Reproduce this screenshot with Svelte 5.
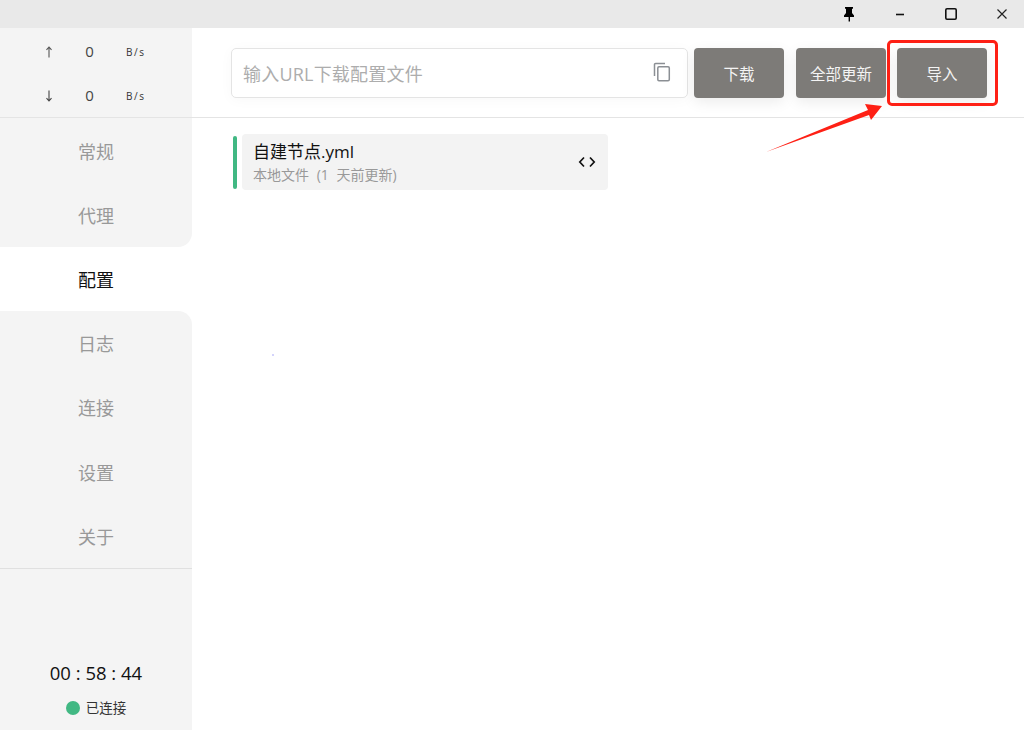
<script>
  const nav = ['常规', '代理', '配置', '日志', '连接', '设置', '关于'];
  const active = 2;
</script>

<div class="window">
  <header class="titlebar">
    <button class="win" aria-label="pin">
      <svg width="14" height="16" viewBox="0 0 14 16"><path d="M3 1h8v1.500L10 3v4l2 2.400V11H8v4.500H6.600V11H2V9.400L4 7V3L3 2.500z" fill="#000"/></svg>
    </button>
    <button class="win" aria-label="minimize">
      <svg width="12" height="12" viewBox="0 0 12 12"><path d="M2 6.500h8" stroke="#111" stroke-width="1.600"/></svg>
    </button>
    <button class="win" aria-label="maximize">
      <svg width="14" height="14" viewBox="0 0 14 14"><rect x="1.800" y="1.800" width="10.400" height="10.400" rx="1.200" fill="none" stroke="#111" stroke-width="1.600"/></svg>
    </button>
    <button class="win" aria-label="close">
      <svg width="12" height="12" viewBox="0 0 12 12"><path d="M1.500 1.500l9 9M10.500 1.500l-9 9" stroke="#222" stroke-width="1.200"/></svg>
    </button>
  </header>

  <div class="body">
    <aside class="sidebar">
      <div class="traffic">
        <div class="rate">
          <svg class="dir" width="8" height="12" viewBox="0 0 8 12" fill="none" stroke="#555" stroke-width="1.100"><path d="M4 11.500V1M1.500 3.800L4 1l2.500 2.800"/></svg>
          <span class="num">0</span><span class="unit">B/s</span>
        </div>
        <div class="rate">
          <svg class="dir" width="8" height="12" viewBox="0 0 8 12" fill="none" stroke="#444" stroke-width="1.100"><path d="M4 .5V11M1.500 8.200L4 11l2.500-2.800"/></svg>
          <span class="num">0</span><span class="unit">B/s</span>
        </div>
      </div>

      <nav class="nav">
        {#each nav as item, i}
          <div class="nav-item" class:active={i === active} class:before={i === active - 1} class:after={i === active + 1}>{item}</div>
        {/each}
      </nav>

      <div class="status">
        <div class="timer">00 : 58 : 44</div>
        <div class="conn"><span class="dot"></span>已连接</div>
      </div>
    </aside>

    <main class="main">
      <div class="toolbar">
        <div class="url">
          <span class="placeholder">输入URL下载配置文件</span>
          <svg class="copy" width="18" height="20" viewBox="0 0 18 20" fill="none" stroke="#8b8f94" stroke-width="1.500">
            <path d="M1.500 14V2.600A1.100 1.100 0 0 1 2.600 1.500H12"/>
            <rect x="4.800" y="4.800" width="11.500" height="14" rx="1.200"/>
          </svg>
        </div>
        <button class="btn first">下载</button>
        <button class="btn second">全部更新</button>
        <button class="btn third">导入</button>
      </div>

      <div class="content">
        <div class="profile">
          <span class="bar"></span>
          <div class="card">
            <div class="info">
              <div class="name">自建节点.yml</div>
              <div class="meta">本地文件 (1 天前更新)</div>
            </div>
            <svg class="code" width="18" height="12" viewBox="0 0 18 12" fill="none" stroke="#111" stroke-width="1.700">
              <path d="M6 1.500L1.800 6 6 10.500M12 1.500L16.200 6 12 10.500"/>
            </svg>
          </div>
        </div>
      </div>
    </main>
  </div>

  <div class="highlight"></div>
  <svg class="arrow" width="130" height="65" viewBox="0 0 130 65">
    <path d="M6 62L108 20 105 14 122 16 111 30 109 25z" fill="#fe2015"/>
  </svg>
  <span class="speck"></span>
</div>

<style>
  :global(body) {
    margin: 0;
    background: #fff;
  }
  .window {
    position: relative;
    width: 1024px;
    height: 730px;
    overflow: hidden;
    display: flex;
    flex-direction: column;
    font-family: "Open Sans", "Noto Sans CJK SC", sans-serif;
    color: #111;
  }
  .titlebar {
    height: 28px;
    flex: none;
    background: #e9e9e9;
    display: flex;
    justify-content: flex-end;
    gap: 7px;
  }
  .win {
    width: 44px;
    border: 0;
    padding: 0;
    background: none;
    display: flex;
    align-items: center;
    justify-content: center;
  }
  .body {
    flex: 1;
    display: flex;
    min-height: 0;
  }
  .sidebar {
    width: 192px;
    flex: none;
    background: #f4f4f4;
    display: flex;
    flex-direction: column;
  }
  .traffic {
    height: 90px;
    box-sizing: border-box;
    border-bottom: 1px solid #e4e4e4;
    padding-top: 1px;
    display: flex;
    flex-direction: column;
  }
  .rate {
    height: 44px;
    display: grid;
    grid-template-columns: 61px 57px 1fr;
    align-items: center;
    font-size: 14px;
    color: #444;
  }
  .dir {
    justify-self: end;
    margin-right: 8px;
    margin-top: 1px;
  }
  .num {
    text-align: center;
    font-size: 15px;
    line-height: 20px;
    margin-top: -1px;
  }
  .unit {
    font-size: 10px;
    letter-spacing: 1.600px;
    padding-left: 8px;
    padding-top: 2px;
    color: #333;
  }
  .nav {
    padding-top: 1px;
    border-bottom: 1px solid #e0e0e0;
    background: #fff;
  }
  .nav-item {
    height: 64.100px;
    box-sizing: border-box;
    display: flex;
    align-items: center;
    justify-content: center;
    background: #f4f4f4;
    font-size: 18px;
    color: #999;
  }
  .nav-item:first-child {
    box-shadow: 0 -1px 0 #f4f4f4;
  }
  .nav-item.active {
    background: #fff;
    color: #111;
  }
  .nav-item.before {
    border-bottom-right-radius: 14px;
  }
  .nav-item.after {
    border-top-right-radius: 14px;
  }
  .status {
    flex: 1;
    display: flex;
    flex-direction: column;
    align-items: center;
    justify-content: flex-end;
    padding-bottom: 12px;
  }
  .timer {
    font-size: 18.500px;
    line-height: 24px;
    color: #111;
    margin-bottom: 13px;
  }
  .conn {
    font-size: 13.500px;
    line-height: 20px;
    color: #333;
    display: flex;
    align-items: center;
    gap: 6px;
  }
  .dot {
    width: 14px;
    height: 14px;
    border-radius: 50%;
    background: #41b883;
  }
  .main {
    flex: 1;
    min-width: 0;
    background: #fff;
    display: flex;
    flex-direction: column;
  }
  .toolbar {
    height: 90px;
    box-sizing: border-box;
    border-bottom: 1px solid #e4e4e4;
    padding: 20px 0 0 39px;
    display: flex;
    align-items: flex-start;
  }
  .url {
    width: 457px;
    height: 50px;
    box-sizing: border-box;
    border: 1px solid #e4e4e4;
    border-radius: 5px;
    display: flex;
    align-items: center;
    justify-content: space-between;
    padding: 0 16px 0 11px;
    box-shadow: 0 2px 14px rgba(0, 0, 0, 0.03);
  }
  .placeholder {
    font-size: 18px;
    line-height: 24px;
    margin-top: 2px;
    letter-spacing: 0.2px;
    color: #adadad;
  }
  .copy {
    display: block;
    margin-bottom: 2px;
  }
  .btn {
    width: 90px;
    height: 50px;
    border: 0;
    padding: 0;
    border-radius: 4px;
    background: #7d7b78;
    color: #f4f4f4;
    font: inherit;
    font-size: 15.500px;
    box-shadow: 0 4px 14px rgba(0, 0, 0, 0.08);
  }
  .first { margin-left: 6px; }
  .second { margin-left: 12px; }
  .third { margin-left: 11px; }
  .content {
    padding: 16px 0 0 41px;
  }
  .profile {
    display: flex;
    align-items: center;
    gap: 5px;
  }
  .bar {
    width: 4px;
    height: 53px;
    border-radius: 2px;
    background: #41b883;
  }
  .card {
    width: 366px;
    height: 56px;
    box-sizing: border-box;
    border-radius: 4px;
    background: #f3f3f3;
    display: flex;
    align-items: center;
    justify-content: space-between;
    padding: 0 12px 0 11px;
  }
  .info {
    margin-top: 1px;
  }
  .name {
    font-size: 17px;
    line-height: 23px;
    color: #111;
  }
  .meta {
    font-size: 14px;
    line-height: 22px;
    margin-top: 1px;
    word-spacing: 4px;
    color: #999;
  }
  .highlight {
    position: absolute;
    left: 887px;
    top: 40px;
    width: 111px;
    height: 66px;
    box-sizing: border-box;
    border: 3px solid #fe2015;
    border-radius: 5px;
  }
  .arrow {
    position: absolute;
    left: 760px;
    top: 90px;
  }
  .speck {
    position: absolute;
    left: 272px;
    top: 354px;
    width: 2px;
    height: 2px;
    background: #d4d4fb;
  }
</style>
